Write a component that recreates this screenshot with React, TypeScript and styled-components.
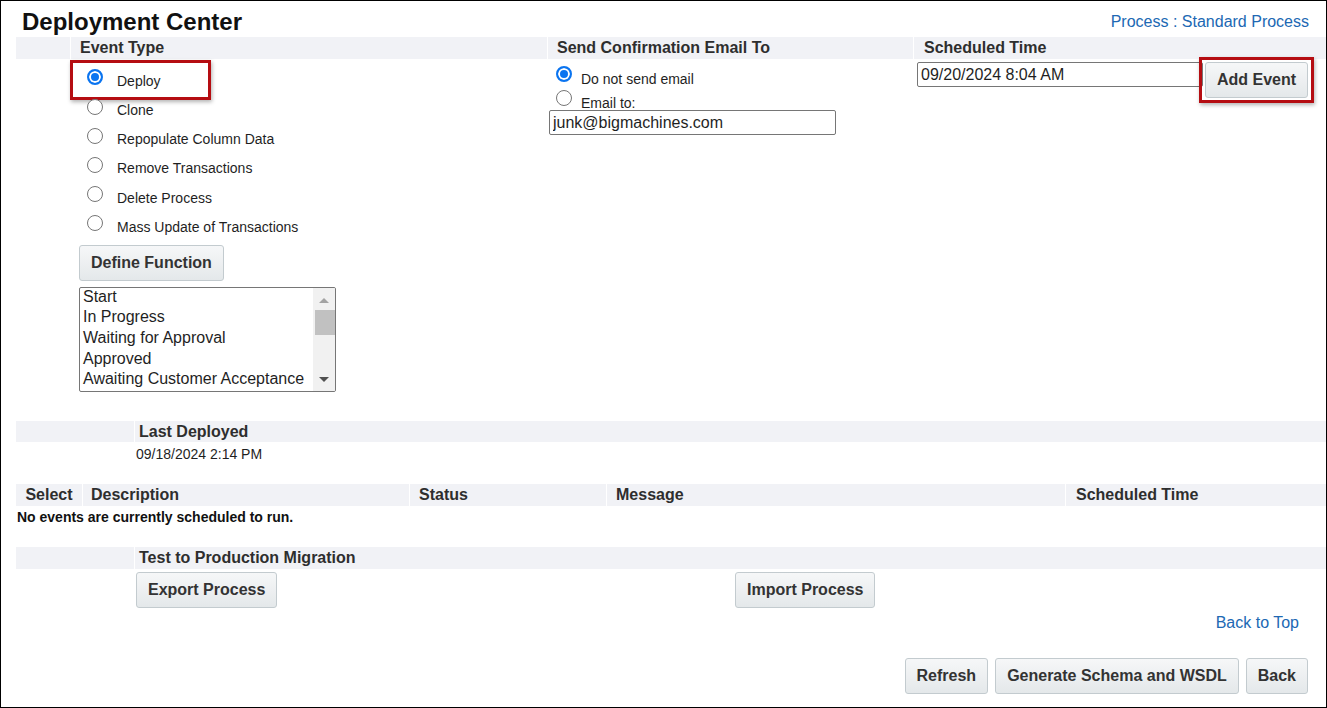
import React from 'react';
import styled, { createGlobalStyle } from 'styled-components';

const GlobalStyle = createGlobalStyle`
  html, body { margin: 0; padding: 0; background: #fff; }
  body { font-family: "Liberation Sans", Arial, sans-serif; color: #1f1f1f; }
  * { box-sizing: border-box; }
`;

const Frame = styled.div`
  width: 1327px;
  height: 708px;
  border: 1px solid #000;
  padding-left: 15px;
  display: flex;
  flex-direction: column;
  overflow: hidden;
`;

const TitleRow = styled.div`
  height: 36px;
  display: flex;
  justify-content: space-between;
  align-items: flex-start;
`;

const Title = styled.h1`
  margin: 0 0 0 6px;
  padding-top: 7px;
  font-size: 24px;
  font-weight: bold;
  color: #111;
  line-height: normal;
`;

const Link = styled.a`
  color: #2068b3;
  font-size: 16px;
  text-decoration: none;
  line-height: normal;
  cursor: pointer;
`;

const ProcessLink = styled(Link)`
  padding-top: 12px;
  margin-right: 17px;
`;

const SectionGrid = styled.div<{ $cols: string; $mt?: number }>`
  display: grid;
  grid-template-columns: ${(p) => p.$cols};
  margin-top: ${(p) => p.$mt ?? 0}px;
`;

const HeadCell = styled.div<{ $sep?: boolean; $pad?: number; $h?: number; $center?: boolean }>`
  background: #f1f2f6;
  height: ${(p) => p.$h ?? 22}px;
  line-height: ${(p) => p.$h ?? 22}px;
  border-left: ${(p) => (p.$sep ? '1px solid #fff' : 'none')};
  padding-left: ${(p) => p.$pad ?? 0}px;
  text-align: ${(p) => (p.$center ? 'center' : 'left')};
  font-size: 16px;
  font-weight: bold;
  color: #2e2e2e;
  white-space: nowrap;
`;

const EventCol = styled.div`
  padding-top: 3.4px;
`;

const Radio = styled.input.attrs({ type: 'radio' })`
  appearance: none;
  -webkit-appearance: none;
  width: 16px;
  height: 16px;
  margin: 0;
  flex: none;
  border-radius: 50%;
  border: 1px solid #767676;
  background: #fff;
  &:checked {
    border: 2px solid #0a74f0;
    background: #0a74f0;
    box-shadow: inset 0 0 0 2px #fff;
  }
`;

const Label = styled.label`
  font-size: 14px;
  line-height: 16px;
  color: #1f1f1f;
  white-space: nowrap;
`;

const EventRow = styled.div<{ $highlight?: boolean }>`
  position: relative;
  height: 29.2px;
  display: flex;
  align-items: flex-start;
  padding-left: 16.5px;
  ${Radio} { margin-top: 7px; }
  ${Label} { margin-top: 10.5px; margin-left: 14.5px; }
  ${(p) =>
    p.$highlight &&
    `&::after {
      content: '';
      position: absolute;
      left: 0;
      top: -2.4px;
      width: 135px;
      height: 34px;
      border: 3px solid #b50d12;
      box-shadow: 1px 2px 4px rgba(0, 0, 0, 0.3);
      pointer-events: none;
    }`}
`;

const Button = styled.button`
  height: 36px;
  padding: 0 11px;
  border: 1px solid #c3cbcf;
  border-radius: 3px;
  background: linear-gradient(#f6f7f8, #e4e8ea);
  font-family: "Liberation Sans", Arial, sans-serif;
  font-size: 16px;
  font-weight: bold;
  color: #333;
  white-space: nowrap;
  cursor: pointer;
`;

const DefineButton = styled(Button)`
  margin: 7px 0 0 9px;
`;

const Listbox = styled.div`
  margin: 6px 0 0 9px;
  width: 257px;
  height: 105px;
  border: 1px solid #767676;
  border-radius: 2px;
  display: flex;
  overflow: hidden;
`;

const ListItems = styled.ul`
  flex: 1;
  list-style: none;
  margin: -1px 0 0;
  padding: 0 3px;
`;

const ListItem = styled.li`
  font-size: 16px;
  line-height: 20.7px;
  color: #1f1f1f;
  white-space: nowrap;
`;

const Scrollbar = styled.div`
  width: 22px;
  background: #f1f1f1;
  display: flex;
  flex-direction: column;
  align-items: center;
`;

const Arrow = styled.span<{ $down?: boolean }>`
  width: 0;
  height: 0;
  border-left: 5px solid transparent;
  border-right: 5px solid transparent;
  ${(p) =>
    p.$down
      ? 'border-top: 5px solid #505050; margin-top: auto; margin-bottom: 9px;'
      : 'border-bottom: 5px solid #a3a3a3; margin-top: 10px;'}
`;

const Thumb = styled.span`
  width: 20px;
  height: 25px;
  margin-top: 7px;
  margin-left: 1px;
  background: #c1c1c1;
`;

const EmailCol = styled.div`
  padding-top: 3px;
`;

const EmailRow = styled.div`
  height: 24px;
  display: flex;
  align-items: flex-start;
  padding-left: 8.5px;
  ${Radio} { margin-top: 4px; }
  ${Label} { margin-top: 9px; margin-left: 9.5px; }
`;

const TextInput = styled.input`
  height: 25px;
  border: 1px solid #767676;
  border-radius: 2px;
  padding: 0 3px;
  font-family: "Liberation Sans", Arial, sans-serif;
  font-size: 16px;
  color: #1f1f1f;
  background: #fff;
`;

const EmailInput = styled(TextInput)`
  width: 287px;
  margin-left: 2px;
`;

const ScheduleCol = styled.div`
  padding: 3px 0 0 4px;
  display: flex;
  align-items: flex-start;
  gap: 2px;
`;

const TimeInput = styled(TextInput)`
  width: 286px;
`;

const Highlighted = styled.span`
  position: relative;
  display: inline-flex;
  &::after {
    content: '';
    position: absolute;
    top: -5px;
    left: -6px;
    right: -6px;
    bottom: -5px;
    border: 3px solid #b50d12;
    box-shadow: 1px 2px 4px rgba(0, 0, 0, 0.3);
    pointer-events: none;
  }
`;

const DateText = styled.div`
  grid-column: 2;
  padding: 4px 0 0 2px;
  height: 42px;
  font-size: 14px;
  line-height: 16px;
  color: #1f1f1f;
`;

const EmptyText = styled.div`
  margin-top: 3px;
  height: 38px;
  padding-left: 1px;
  font-size: 14px;
  font-weight: bold;
  line-height: 16px;
  color: #111;
`;

const ButtonCell = styled.div`
  padding: 3px 0 0 2px;
`;

const BackTop = styled.div`
  margin-top: 6px;
  padding-right: 27px;
  display: flex;
  justify-content: flex-end;
`;

const Footer = styled.div`
  margin-top: 26px;
  padding-right: 18px;
  display: flex;
  justify-content: flex-end;
  gap: 7px;
`;

const eventTypes = [
  'Deploy',
  'Clone',
  'Repopulate Column Data',
  'Remove Transactions',
  'Delete Process',
  'Mass Update of Transactions',
];

const statuses = ['Start', 'In Progress', 'Waiting for Approval', 'Approved', 'Awaiting Customer Acceptance'];

export default function App() {
  return (
    <>
      <GlobalStyle />
      <Frame>
        <TitleRow>
          <Title>Deployment Center</Title>
          <ProcessLink>Process : Standard Process</ProcessLink>
        </TitleRow>

        <SectionGrid $cols="54px 477px 366px 1fr">
          <HeadCell />
          <HeadCell $sep $pad={9}>Event Type</HeadCell>
          <HeadCell $sep $pad={9}>Send Confirmation Email To</HeadCell>
          <HeadCell $sep $pad={10}>Scheduled Time</HeadCell>

          <div />
          <EventCol>
            {eventTypes.map((t, i) => (
              <EventRow key={t} $highlight={i === 0}>
                <Radio name="eventType" defaultChecked={i === 0} />
                <Label>{t}</Label>
              </EventRow>
            ))}
            <DefineButton>Define Function</DefineButton>
            <Listbox>
              <ListItems>
                {statuses.map((s) => (
                  <ListItem key={s}>{s}</ListItem>
                ))}
              </ListItems>
              <Scrollbar>
                <Arrow />
                <Thumb />
                <Arrow $down />
              </Scrollbar>
            </Listbox>
          </EventCol>
          <EmailCol>
            <EmailRow>
              <Radio name="emailTo" defaultChecked />
              <Label>Do not send email</Label>
            </EmailRow>
            <EmailRow>
              <Radio name="emailTo" />
              <Label>Email to:</Label>
            </EmailRow>
            <EmailInput defaultValue="junk@bigmachines.com" />
          </EmailCol>
          <ScheduleCol>
            <TimeInput defaultValue="09/20/2024 8:04 AM" />
            <Highlighted>
              <Button>Add Event</Button>
            </Highlighted>
          </ScheduleCol>
        </SectionGrid>

        <SectionGrid $cols="118px 1fr" $mt={29}>
          <HeadCell $h={21} />
          <HeadCell $h={21} $sep $pad={4}>Last Deployed</HeadCell>
          <DateText>09/18/2024 2:14 PM</DateText>
        </SectionGrid>

        <SectionGrid $cols="66px 327px 197px 459px 1fr">
          <HeadCell $center>Select</HeadCell>
          <HeadCell $sep $pad={8}>Description</HeadCell>
          <HeadCell $sep $pad={9}>Status</HeadCell>
          <HeadCell $sep $pad={9}>Message</HeadCell>
          <HeadCell $sep $pad={10}>Scheduled Time</HeadCell>
        </SectionGrid>
        <EmptyText>No events are currently scheduled to run.</EmptyText>

        <SectionGrid $cols="118px 599px 1fr">
          <HeadCell />
          <HeadCell $sep $pad={4}>Test to Production Migration</HeadCell>
          <HeadCell />
          <div />
          <ButtonCell>
            <Button>Export Process</Button>
          </ButtonCell>
          <ButtonCell>
            <Button>Import Process</Button>
          </ButtonCell>
        </SectionGrid>

        <BackTop>
          <Link>Back to Top</Link>
        </BackTop>

        <Footer>
          <Button>Refresh</Button>
          <Button>Generate Schema and WSDL</Button>
          <Button>Back</Button>
        </Footer>
      </Frame>
    </>
  );
}
